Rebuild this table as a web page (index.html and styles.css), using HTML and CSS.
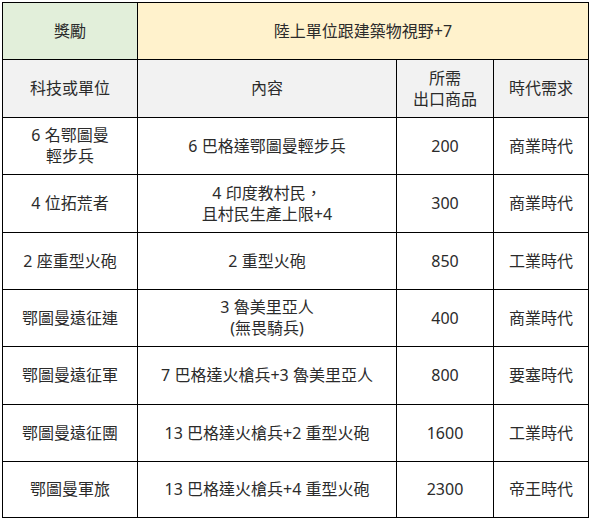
FILE: index.html
```html
<!DOCTYPE html>
<html lang="zh-Hant">
<head>
<meta charset="utf-8">
<title>獎勵</title>
<link rel="stylesheet" href="styles.css">
</head>
<body>
<div class="table" role="table">
  <div class="cell head-green">獎勵</div>
  <div class="cell head-yellow span3">陸上單位跟建築物視野+7</div>

  <div class="cell head-gray">科技或單位</div>
  <div class="cell head-gray">內容</div>
  <div class="cell head-gray">所需<br>出口商品</div>
  <div class="cell head-gray">時代需求</div>

  <div class="cell">6 名鄂圖曼<br>輕步兵</div>
  <div class="cell">6 巴格達鄂圖曼輕步兵</div>
  <div class="cell">200</div>
  <div class="cell">商業時代</div>

  <div class="cell">4 位拓荒者</div>
  <div class="cell">4 印度教村民，<br>且村民生產上限+4</div>
  <div class="cell">300</div>
  <div class="cell">商業時代</div>

  <div class="cell">2 座重型火砲</div>
  <div class="cell">2 重型火砲</div>
  <div class="cell">850</div>
  <div class="cell">工業時代</div>

  <div class="cell">鄂圖曼遠征連</div>
  <div class="cell">3 魯美里亞人<br>(無畏騎兵)</div>
  <div class="cell">400</div>
  <div class="cell">商業時代</div>

  <div class="cell">鄂圖曼遠征軍</div>
  <div class="cell">7 巴格達火槍兵+3 魯美里亞人</div>
  <div class="cell">800</div>
  <div class="cell">要塞時代</div>

  <div class="cell">鄂圖曼遠征團</div>
  <div class="cell">13 巴格達火槍兵+2 重型火砲</div>
  <div class="cell">1600</div>
  <div class="cell">工業時代</div>

  <div class="cell">鄂圖曼軍旅</div>
  <div class="cell">13 巴格達火槍兵+4 重型火砲</div>
  <div class="cell">2300</div>
  <div class="cell">帝王時代</div>
</div>
</body>
</html>
```

FILE: styles.css
```css
html, body {
  margin: 0;
  padding: 0;
  background: #ffffff;
}

body {
  font-family: "Noto Sans", "Noto Sans CJK TC", sans-serif;
  font-size: 16px;
  line-height: 21px;
  color: #2b2b2b;
}

.table {
  margin: 2px 0 0 2px;
  width: 585px;
  display: grid;
  grid-template-columns: 134px 258px 96px 94px;
  grid-template-rows: 56px 57px 56px 57px 56px 56px 57px 56px 55px;
  gap: 1px;
  padding: 1px;
  background: #000000;
}

.cell {
  background: #ffffff;
  display: flex;
  align-items: center;
  justify-content: center;
  text-align: center;
}

.span3 {
  grid-column: span 3;
}

.head-green {
  background: #e2efda;
}

.head-yellow {
  background: #fff2cc;
}

.head-gray {
  background: #f2f2f2;
}
```
